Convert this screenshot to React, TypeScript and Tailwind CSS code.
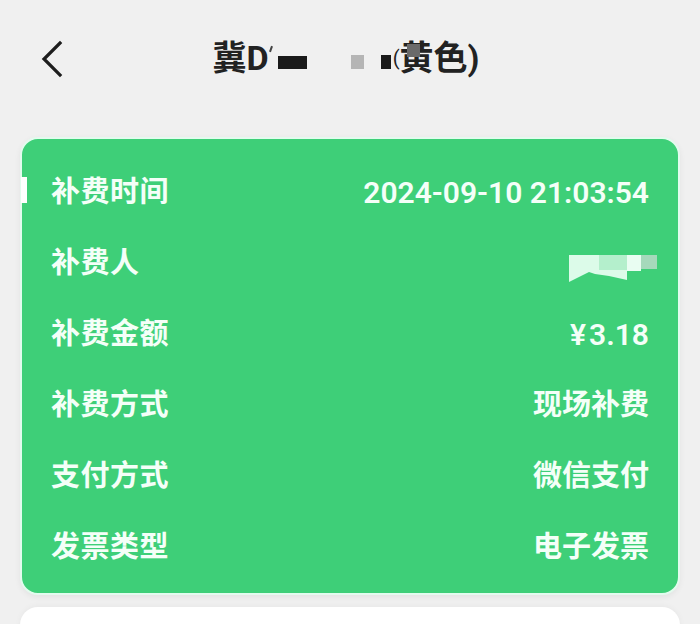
import React from "react";

const rows: { label: string; value: React.ReactNode }[] = [
  { label: "补费时间", value: <span className="text-[30px] font-semibold">2024-09-10 21:03:54</span> },
  { label: "补费人", value: <NameMask /> },
  {
    label: "补费金额",
    value: (
      <span className="text-[30px] font-semibold">
        ¥<span className="ml-[3px]">3.18</span>
      </span>
    ),
  },
  { label: "补费方式", value: <span className="text-[29px] font-bold">现场补费</span> },
  { label: "支付方式", value: <span className="text-[29px] font-bold">微信支付</span> },
  { label: "发票类型", value: <span className="text-[29px] font-bold">电子发票</span> },
];

function NameMask() {
  // pixelated name blob
  return (
    <div className="relative mt-[10px] mr-[-8px] h-[27px] w-[88px]">
      <div className="absolute left-0 top-0 h-[16px] w-[30px] bg-[#dcfbe9]" />
      <div className="absolute left-[30px] top-0 h-[16px] w-[28px] bg-[#b4efcc]" />
      <div className="absolute left-[58px] top-0 h-[16px] w-[14px] bg-[#e9fdf2]" />
      <div className="absolute left-[72px] top-0 h-[14px] w-[16px] bg-[#a5d9bb]" />
      <svg className="absolute left-0 top-[15px]" width="58" height="12" viewBox="0 0 58 12">
        <polygon points="0,0 58,0 58,10 40,6 26,4 20,2 0,12" fill="#dcfbe9" />
      </svg>
    </div>
  );
}

export default function App() {
  return (
    <div
      className="min-h-[624px] w-[700px] overflow-hidden bg-[#f0f0f0]"
      style={{ fontFamily: "Roboto, 'Noto Sans CJK SC', sans-serif" }}
    >
      {/* Header */}
      <div className="relative flex h-[118px] items-center justify-center pb-[2px]">
        <button className="absolute left-[34px] top-[36px] p-1">
          <svg width="26" height="38" viewBox="0 0 26 38" fill="none">
            <path d="M22 3L6 19l16 16" stroke="#1d1d1d" strokeWidth="3.2" strokeLinecap="square" />
          </svg>
        </button>
        <div className="mr-[8px] flex h-[40px] items-center text-[34px] font-bold leading-none text-[#222]">
          <span>冀D</span>
          <span className="ml-[1px] mb-[18px] h-[6px] w-[2px] rotate-[20deg] bg-[#444]" />
          <span className="ml-[6px] mt-[8px] h-[13px] w-[29px] bg-[#1a1a1a]" />
          <span className="ml-[44px] mt-[8px] h-[14px] w-[13px] bg-[#b5b5b5]" />
          <span className="ml-[17px] mt-[8px] h-[14px] w-[10px] bg-[#1a1a1a]" />
          <span className="ml-[2px] text-[20px] font-normal">(</span>
          <span className="relative inline-block">
            黄
            <span className="absolute left-[7px] top-[3px] block h-[13px] w-[13px] bg-[#6a6a6a]" />
          </span>
          <span>色)</span>
        </div>
      </div>

      {/* Green card */}
      <div className="relative mx-[20px] mt-[19px] rounded-[18px] border-2 border-[#e3fbee] bg-[#3ecf78] px-[29px] pb-[10px] pt-[18px] shadow-[0_2px_6px_rgba(0,0,0,0.06)]">
        <div className="absolute left-[-1px] top-[38px] h-[26px] w-[6px] bg-white" />
        {rows.map((r) => (
          <div key={r.label} className="flex h-[71px] items-center justify-between text-[#f4fff8]">
            <span className="text-[29px] font-bold tracking-[0.5px]">{r.label}</span>
            {r.value}
          </div>
        ))}
      </div>

      {/* next card */}
      <div className="mx-[20px] mt-[12px] h-[40px] rounded-t-[18px] bg-white shadow-[0_-1px_6px_rgba(0,0,0,0.04)]" />
    </div>
  );
}
